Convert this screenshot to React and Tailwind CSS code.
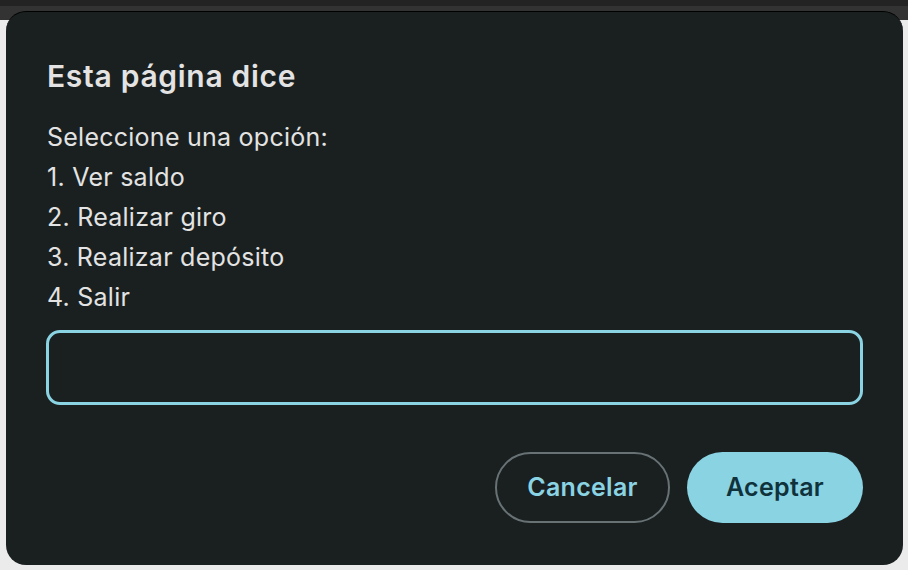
import React, { useState } from 'react';

const font = { fontFamily: 'Inter, "Noto Sans", sans-serif' };

export default function App() {
  const [value, setValue] = useState('');

  return (
    <div className="relative w-[908px] h-[570px] bg-[#ebebeb] overflow-hidden" style={font}>
      {/* browser bar behind the dialog */}
      <div className="absolute inset-x-0 top-0 h-[20px] bg-[#333333] border-t-[6px] border-[#232323]" />

      <div className="relative pt-[11px] pl-[6px]">
        <div className="w-[897px] h-[554px] bg-[#1a1f20] rounded-[20px] border-t border-black px-[41px] pt-[46px] flex flex-col">
          <h1 className="text-[30px] leading-[36px] font-semibold text-[#e3e3e3] tracking-[0.7px]">
            Esta página dice
          </h1>

          <div className="mt-[23px] text-[25px] leading-[40px] text-[#e3e3e3] tracking-[0.25px]">
            <p>Seleccione una opción:</p>
            <p>1. Ver saldo</p>
            <p>2. Realizar giro</p>
            <p>3. Realizar depósito</p>
            <p>4. Salir</p>
          </div>

          <input
            value={value}
            onChange={(e) => setValue(e.target.value)}
            className="mt-[13px] h-[75px] w-[817px] -ml-[1px] rounded-[14px] border-[3px] border-[#8ad3e3] bg-transparent px-4 text-[25px] text-[#e3e3e3] outline-none"
          />

          <div className="mt-[47px] flex justify-end gap-[17px] -mr-[1px]">
            <button className="w-[175px] h-[71px] rounded-full border-2 border-[#687274] text-[#8ad3e3] text-[25px] font-semibold tracking-[0.3px]">
              Cancelar
            </button>
            <button className="w-[176px] h-[71px] rounded-full bg-[#8ad3e3] text-[#0f323b] text-[25px] font-semibold tracking-[0.3px]">
              Aceptar
            </button>
          </div>
        </div>
      </div>
    </div>
  );
}
